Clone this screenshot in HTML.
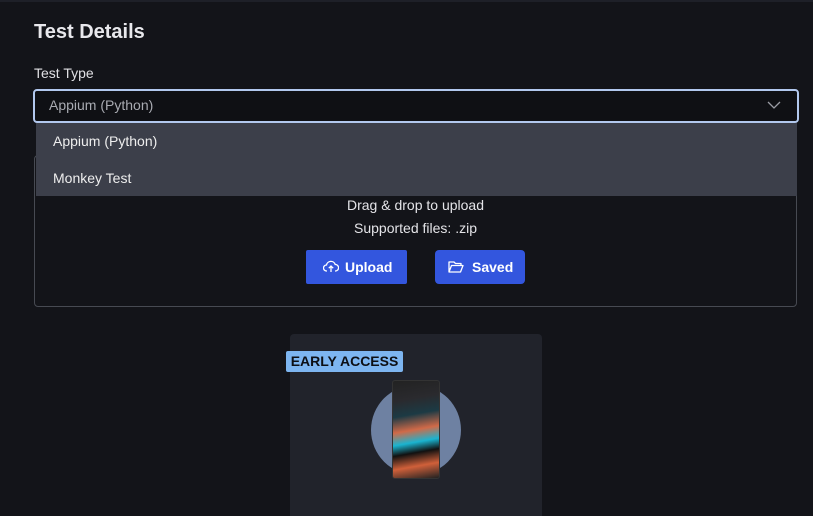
<!DOCTYPE html>
<html><head><style>
html,body{margin:0;width:813px;height:516px;overflow:hidden}
body{background:#131419;font-family:"Liberation Sans",sans-serif;position:relative;color:#e6e6ea}
.a{position:absolute}
</style></head><body>
<div class="a" style="left:0;top:0;width:813px;height:2px;background:#1e2028"></div>
<div class="a" style="left:34px;top:21px;font-size:20px;font-weight:bold;color:#e8e8ec">Test Details</div>
<div class="a" style="left:34px;top:65px;font-size:14px;color:#e0e0e4">Test Type</div>
<div class="a" style="left:33px;top:89px;width:762px;height:30px;border:2px solid #b2c8ee;border-radius:4px;background:#0f1014"></div>
<div class="a" style="left:49px;top:97px;font-size:14px;color:#a9abb2">Appium (Python)</div>
<svg class="a" style="left:766px;top:100px" width="16" height="10"><path d="M2 2l6 6 6-6" stroke="#9a9ca4" stroke-width="1.3" fill="none"/></svg>
<div class="a" style="left:34px;top:155px;width:761px;height:150px;border:1px solid #474a52;border-radius:4px"></div>
<div class="a" style="left:36px;top:123px;width:761px;height:73px;background:#3c3f4a"></div>
<div class="a" style="left:53px;top:133px;font-size:14px;color:#eee">Appium (Python)</div>
<div class="a" style="left:53px;top:170px;font-size:14px;color:#eee">Monkey Test</div>
<div class="a" style="left:9px;width:813px;top:197px;text-align:center;font-size:14px;color:#e4e4e8;line-height:16px">Drag &amp; drop to upload</div>
<div class="a" style="left:9px;width:813px;top:220px;text-align:center;font-size:14px;color:#e4e4e8;line-height:16px">Supported files: .zip</div>
<div class="a" style="left:306px;top:250px;width:101px;height:34px;background:#3356de;border-radius:2px;color:#fff;font-size:14px;font-weight:bold;line-height:34px">
<svg class="a" style="left:17px;top:10px" width="16" height="14" viewBox="0 0 16 14"><path d="M4 11H3.5a3 3 0 0 1 0-6 4.5 4.5 0 0 1 8.7-.5A3 3 0 0 1 12.5 11H12M8 12V6M5.8 8.2L8 6l2.2 2.2" stroke="#fff" stroke-width="1.3" fill="none"/></svg>
<span class="a" style="left:39px">Upload</span></div>
<div class="a" style="left:435px;top:250px;width:90px;height:34px;background:#3356de;border-radius:4px;color:#fff;font-size:14px;font-weight:bold;line-height:34px">
<svg class="a" style="left:13px;top:10px" width="16" height="14" viewBox="0 0 16 14"><path d="M1 12V2h5l1.5 1.5H13v2M1 12l2.5-6.5H15L12.5 12z" stroke="#fff" stroke-width="1.3" fill="none" stroke-linejoin="round"/></svg>
<span class="a" style="left:37px">Saved</span></div>
<div class="a" style="left:290px;top:334px;width:252px;height:182px;background:#21232b;border-radius:4px 4px 0 0"></div>
<div class="a" style="left:371px;top:385px;width:90px;height:90px;border-radius:50%;background:#6e81a2"></div>
<div class="a" style="left:392px;top:380px;width:48px;height:99px;border-radius:3px;background:linear-gradient(170deg,#222 0%,#2a2a2e 20%,#1c3a44 35%,#d06a48 50%,#1ab4d0 62%,#111 72%,#d0603a 85%,#222 100%);border:1px solid #333;box-sizing:border-box"></div>
<div class="a" style="left:286px;top:351px;width:117px;height:21px;background:#7db5f0;border-radius:2px;color:#0d0f14;font-size:14px;font-weight:bold;line-height:21px;text-align:center">EARLY ACCESS</div>
</body></html>
